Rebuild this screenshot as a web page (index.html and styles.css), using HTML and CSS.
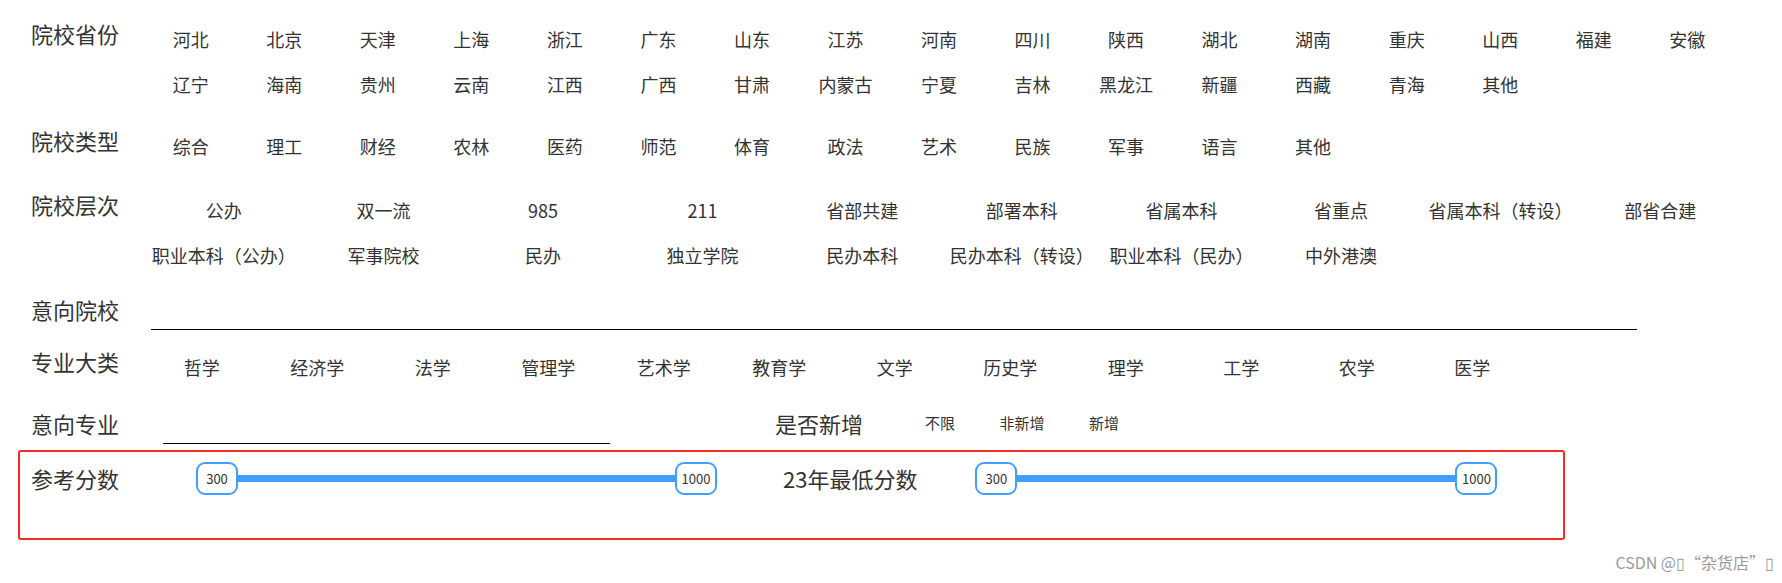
FILE: index.html
```html
<!DOCTYPE html>
<html lang="zh-CN">
<head>
    <meta charset="UTF-8">
    <meta name="viewport" content="width=device-width, initial-scale=1.0">
    <title>院校筛选</title>
    <link rel="stylesheet" href="styles.css">
</head>
<body>
<div class="page">

    <!-- 院校省份 -->
    <div class="row row-province">
        <div class="row-label">院校省份</div>
        <div class="opts opts-17">
            <span class="opt">河北</span><span class="opt">北京</span><span class="opt">天津</span><span class="opt">上海</span>
            <span class="opt">浙江</span><span class="opt">广东</span><span class="opt">山东</span><span class="opt">江苏</span>
            <span class="opt">河南</span><span class="opt">四川</span><span class="opt">陕西</span><span class="opt">湖北</span>
            <span class="opt">湖南</span><span class="opt">重庆</span><span class="opt">山西</span><span class="opt">福建</span>
            <span class="opt">安徽</span>
            <span class="opt">辽宁</span><span class="opt">海南</span><span class="opt">贵州</span><span class="opt">云南</span>
            <span class="opt">江西</span><span class="opt">广西</span><span class="opt">甘肃</span><span class="opt">内蒙古</span>
            <span class="opt">宁夏</span><span class="opt">吉林</span><span class="opt">黑龙江</span><span class="opt">新疆</span>
            <span class="opt">西藏</span><span class="opt">青海</span><span class="opt">其他</span>
        </div>
    </div>

    <!-- 院校类型 -->
    <div class="row row-type">
        <div class="row-label">院校类型</div>
        <div class="opts opts-17">
            <span class="opt">综合</span><span class="opt">理工</span><span class="opt">财经</span><span class="opt">农林</span>
            <span class="opt">医药</span><span class="opt">师范</span><span class="opt">体育</span><span class="opt">政法</span>
            <span class="opt">艺术</span><span class="opt">民族</span><span class="opt">军事</span><span class="opt">语言</span>
            <span class="opt">其他</span>
        </div>
    </div>

    <!-- 院校层次 -->
    <div class="row row-level">
        <div class="row-label">院校层次</div>
        <div class="opts opts-10">
            <span class="opt">公办</span><span class="opt">双一流</span><span class="opt">985</span><span class="opt">211</span>
            <span class="opt">省部共建</span><span class="opt">部署本科</span><span class="opt">省属本科</span><span class="opt">省重点</span>
            <span class="opt">省属本科（转设）</span><span class="opt">部省合建</span>
            <span class="opt">职业本科（公办）</span><span class="opt">军事院校</span><span class="opt">民办</span><span class="opt">独立学院</span>
            <span class="opt">民办本科</span><span class="opt">民办本科（转设）</span><span class="opt">职业本科（民办）</span><span class="opt">中外港澳</span>
        </div>
    </div>

    <!-- 意向院校 -->
    <div class="row row-school">
        <div class="row-label">意向院校</div>
        <input class="line-input school-input" type="text">
    </div>

    <!-- 专业大类 -->
    <div class="row row-major">
        <div class="row-label">专业大类</div>
        <div class="opts opts-major">
            <span class="opt">哲学</span><span class="opt">经济学</span><span class="opt">法学</span><span class="opt">管理学</span>
            <span class="opt">艺术学</span><span class="opt">教育学</span><span class="opt">文学</span><span class="opt">历史学</span>
            <span class="opt">理学</span><span class="opt">工学</span><span class="opt">农学</span><span class="opt">医学</span>
        </div>
    </div>

    <!-- 意向专业 / 是否新增 -->
    <div class="row row-subject">
        <div class="row-label">意向专业</div>
        <input class="line-input subject-input" type="text">
        <div class="sub-label new-label">是否新增</div>
        <div class="new-opts">
            <span>不限</span><span>非新增</span><span>新增</span>
        </div>
    </div>

    <!-- 分数 -->
    <div class="row score-row">
        <div class="row-label">参考分数</div>
        <div class="slider slider-ref">
            <span class="thumb">300</span>
            <span class="track"></span>
            <span class="thumb">1000</span>
        </div>
        <div class="sub-label low-label">23年最低分数</div>
        <div class="slider slider-low">
            <span class="thumb">300</span>
            <span class="track"></span>
            <span class="thumb">1000</span>
        </div>
    </div>

</div>

<div class="watermark">CSDN @▯“杂货店”▯</div>
</body>
</html>
```

FILE: styles.css
```css
body{
    margin: 0;
    font-family: "Noto Sans CJK SC", "Noto Sans", sans-serif;
    color: #333;
    background: #fff;
}
.page{
    padding: 17px 0 0 18px;
}
.row{
    display: flex;
    align-items: flex-start;
    padding-left: 13px;
}
.row-label{
    flex: none;
    width: 113px;
    font-size: 22px;
    line-height: 32px;
}
.opts{
    width: 1590px;
    font-size: 18px;
    line-height: 45px;
    text-align: center;
}
.opts-17{
    display: grid;
    grid-template-columns: repeat(17, 1fr);
}
.opts-10{
    display: grid;
    width: 1596px;
    grid-template-columns: repeat(10, 1fr);
}
.opts-major{
    display: flex;
}
.opts-major .opt{
    width: 115.5px;
}
.opt{
    white-space: nowrap;
    cursor: pointer;
}

.row-type{ margin-top: 17px; }
.row-level{ margin-top: 19px; }
.row-school{ margin-top: 15px; }
.row-major{ margin-top: 15px; }
.row-subject{ margin-top: 17px; }

.line-input{
    height: 36px;
    padding: 0;
    border: none;
    border-bottom: 1px solid #000;
    outline: none;
    background: transparent;
    font: inherit;
}
.school-input{
    margin-left: 7px;
    width: 1486px;
}
.subject-input{
    margin-left: 19px;
    width: 447px;
}

.sub-label{
    font-size: 22px;
    line-height: 32px;
    white-space: nowrap;
}
.new-label{
    margin-left: 165px;
}
.new-opts{
    display: flex;
    margin-left: 36px;
}
.new-opts span{
    width: 82px;
    text-align: center;
    font-size: 15px;
    line-height: 32px;
}

.score-row{
    margin-top: 6px;
    width: 1547px;
    height: 90px;
    box-sizing: border-box;
    border: 2px solid #f62b24;
    border-radius: 3px;
    padding: 10px 0 0 11px;
}
.slider{
    display: flex;
    align-items: center;
    height: 33px;
}
.slider-ref{
    margin-left: 52px;
    width: 521px;
}
.low-label{
    margin-left: 66px;
}
.slider-low{
    margin-left: 58px;
    width: 522px;
}
.thumb{
    flex: none;
    width: 42px;
    height: 33px;
    box-sizing: border-box;
    border: 2px solid #409eff;
    border-radius: 9px;
    background: #fff;
    font-size: 13px;
    line-height: 29px;
    text-align: center;
    color: #333;
}
.track{
    flex: 1;
    height: 7px;
    background: #409eff;
}

.watermark{
    position: absolute;
    top: 550px;
    right: 8px;
    font-size: 16px;
    color: #9a9a9a;
    white-space: nowrap;
}
```
